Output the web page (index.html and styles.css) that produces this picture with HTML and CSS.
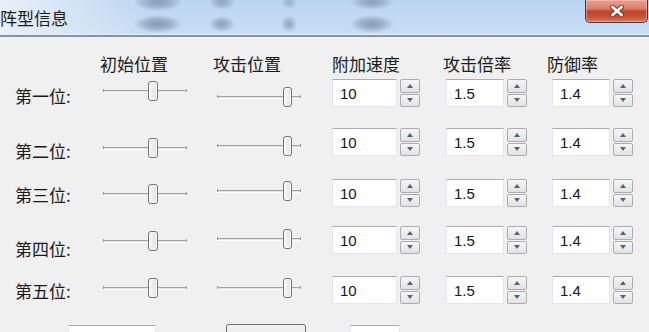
FILE: index.html
```html
<!DOCTYPE html>
<html lang="zh">
<head>
<meta charset="utf-8">
<title>阵型信息</title>
<link rel="stylesheet" href="styles.css">
</head>
<body>
<div class="window">
  <div class="titlebar">
    <span class="title">阵型信息</span>
    <div class="close">
      <svg width="16" height="12" viewBox="0 0 16 12">
        <path d="M3.5 2 L12.5 10 M12.5 2 L3.5 10" stroke="#7a2b1e" stroke-width="4.8" stroke-linecap="round" fill="none"/>
        <path d="M3.5 2 L12.5 10 M12.5 2 L3.5 10" stroke="#ffffff" stroke-width="3" stroke-linecap="round" fill="none"/>
      </svg>
    </div>
  </div>

  <div class="form">
    <div class="row head">
      <div></div>
      <div class="h">初始位置</div>
      <div class="h h-s2">攻击位置</div>
      <div class="h h-n1">附加速度</div>
      <div class="h">攻击倍率</div>
      <div class="h h-n3">防御率</div>
    </div>

    <div class="row r1">
      <div class="lbl">第一位:</div>
      <div class="slider s1"><div class="thumb"></div></div>
      <div class="slider s2"><div class="thumb"></div></div>
      <div class="spin w1"><div class="field">10</div><div class="btns"><div class="btn up"></div><div class="btn down"></div></div></div>
      <div class="spin"><div class="field">1.5</div><div class="btns"><div class="btn up"></div><div class="btn down"></div></div></div>
      <div class="spin"><div class="field">1.4</div><div class="btns"><div class="btn up"></div><div class="btn down"></div></div></div>
    </div>

    <div class="row r2">
      <div class="lbl">第二位:</div>
      <div class="slider s1"><div class="thumb"></div></div>
      <div class="slider s2"><div class="thumb"></div></div>
      <div class="spin w1"><div class="field">10</div><div class="btns"><div class="btn up"></div><div class="btn down"></div></div></div>
      <div class="spin"><div class="field">1.5</div><div class="btns"><div class="btn up"></div><div class="btn down"></div></div></div>
      <div class="spin"><div class="field">1.4</div><div class="btns"><div class="btn up"></div><div class="btn down"></div></div></div>
    </div>

    <div class="row r3">
      <div class="lbl">第三位:</div>
      <div class="slider s1"><div class="thumb"></div></div>
      <div class="slider s2"><div class="thumb"></div></div>
      <div class="spin w1"><div class="field">10</div><div class="btns"><div class="btn up"></div><div class="btn down"></div></div></div>
      <div class="spin"><div class="field">1.5</div><div class="btns"><div class="btn up"></div><div class="btn down"></div></div></div>
      <div class="spin"><div class="field">1.4</div><div class="btns"><div class="btn up"></div><div class="btn down"></div></div></div>
    </div>

    <div class="row r4">
      <div class="lbl">第四位:</div>
      <div class="slider s1"><div class="thumb"></div></div>
      <div class="slider s2"><div class="thumb"></div></div>
      <div class="spin w1"><div class="field">10</div><div class="btns"><div class="btn up"></div><div class="btn down"></div></div></div>
      <div class="spin"><div class="field">1.5</div><div class="btns"><div class="btn up"></div><div class="btn down"></div></div></div>
      <div class="spin"><div class="field">1.4</div><div class="btns"><div class="btn up"></div><div class="btn down"></div></div></div>
    </div>

    <div class="row r5">
      <div class="lbl">第五位:</div>
      <div class="slider s1"><div class="thumb"></div></div>
      <div class="slider s2"><div class="thumb"></div></div>
      <div class="spin w1"><div class="field">10</div><div class="btns"><div class="btn up"></div><div class="btn down"></div></div></div>
      <div class="spin"><div class="field">1.5</div><div class="btns"><div class="btn up"></div><div class="btn down"></div></div></div>
      <div class="spin"><div class="field">1.4</div><div class="btns"><div class="btn up"></div><div class="btn down"></div></div></div>
    </div>

    <div class="bottom">
      <div class="box b1"></div>
      <div class="box b2"></div>
      <div class="box b3"></div>
    </div>
  </div>
</div>
</body>
</html>
```

FILE: styles.css
```css
html, body {
  margin: 0;
  padding: 0;
}
body {
  width: 649px;
  height: 332px;
  overflow: hidden;
  background: #f0f0f0;
  font-family: "Noto Sans CJK SC", "Liberation Sans", sans-serif;
  color: #1a1a1a;
}
.window {
  display: flex;
  flex-direction: column;
  height: 332px;
}

/* ---------- title bar ---------- */
.titlebar {
  height: 35px;
  flex: none;
  display: flex;
  align-items: flex-start;
  justify-content: space-between;
  border-bottom: 2px solid #8494a8;
  box-shadow: inset 0 -1px 0 #e4edf7;
  background:
    radial-gradient(ellipse 24px 9px at 158px 2px, rgba(125,145,172,.85) 0, rgba(125,145,172,.5) 55%, rgba(125,145,172,0) 100%),
    radial-gradient(ellipse 24px 9px at 158px 24px, rgba(125,145,172,.9) 0, rgba(125,145,172,.55) 55%, rgba(125,145,172,0) 100%),
    radial-gradient(ellipse 13px 8px at 222px 2px, rgba(125,145,172,.7) 0, rgba(125,145,172,.4) 55%, rgba(125,145,172,0) 100%),
    radial-gradient(ellipse 13px 8px at 222px 24px, rgba(125,145,172,.8) 0, rgba(125,145,172,.45) 55%, rgba(125,145,172,0) 100%),
    radial-gradient(ellipse 8px 7px at 289px 2px, rgba(125,145,172,.55) 0, rgba(125,145,172,.3) 55%, rgba(125,145,172,0) 100%),
    radial-gradient(ellipse 8px 8px at 289px 24px, rgba(125,145,172,.7) 0, rgba(125,145,172,.4) 55%, rgba(125,145,172,0) 100%),
    radial-gradient(ellipse 22px 8px at 372px 2px, rgba(125,145,172,.8) 0, rgba(125,145,172,.45) 55%, rgba(125,145,172,0) 100%),
    radial-gradient(ellipse 22px 9px at 372px 24px, rgba(125,145,172,.85) 0, rgba(125,145,172,.5) 55%, rgba(125,145,172,0) 100%),
    linear-gradient(to right, rgba(236,243,250,.9) 0, rgba(236,243,250,0) 150px),
    linear-gradient(#bbd5f1, #c8ddf3);
}
.title {
  font-size: 17px;
  line-height: 35px;
  color: #1c1c1c;
}
.close {
  width: 63px;
  height: 23px;
  margin-right: 1px;
  box-sizing: border-box;
  border: 1px solid #6a2a1f;
  border-top: none;
  border-radius: 0 0 5px 5px;
  background: linear-gradient(#e6a191 0%, #d8836d 38%, #c0452c 52%, #c65237 78%, #db7d60 100%);
  box-shadow: inset 0 0 0 1px rgba(255,210,200,.45);
  display: flex;
  align-items: center;
  justify-content: center;
}

/* ---------- form ---------- */
.form {
  display: flex;
  flex-direction: column;
}
.row {
  display: grid;
  grid-template-columns: 88px 114px 115px 114px 106px 1fr;
  padding-left: 15px;
  align-items: start;
}
.head { height: 42px; }
.r1 { height: 49px; }
.r2 { height: 51px; }
.r3 { height: 47px; }
.r4 { height: 50px; }
.r5 { height: 49px; }

.h {
  font-size: 17px;
  line-height: 20px;
  margin-top: 17px;
  margin-left: -3px;
  white-space: nowrap;
}
.h-s2 { margin-left: -4px; }
.h-n1 { margin-left: 0; }
.h-n3 { margin-left: -5px; }

.lbl {
  font-size: 17px;
  line-height: 20px;
  white-space: nowrap;
}
.r1 .lbl { margin-top: 7px; }
.r2 .lbl { margin-top: 13px; }
.r3 .lbl { margin-top: 6px; }
.r4 .lbl { margin-top: 13px; }
.r5 .lbl { margin-top: 5px; }

/* ---------- slider ---------- */
.slider {
  width: 84px;
  height: 20px;
  display: flex;
  background:
    linear-gradient(to right, #999 0, #999 1px, transparent 1px, transparent 83px, #999 83px) 0 8px / 84px 3px no-repeat,
    linear-gradient(#a2a2a2 0, #a2a2a2 1px, #e2e2e2 1px, #e2e2e2 2px, #ffffff 2px) 0 9px / 84px 3px no-repeat;
}
.thumb {
  width: 10px;
  height: 20px;
  box-sizing: border-box;
  border: 1px solid #737373;
  border-radius: 3px;
  background: linear-gradient(to right, #f7f7f7, #e4e4e4);
  box-shadow: inset 0 0 0 1px #fdfdfd;
}
.s1 .thumb { margin-left: 45px; }
.s2 .thumb { margin-left: 66px; width: 9px; }

.r1 .s1 { margin-top: 2px; }
.r1 .s2 { margin-top: 8px; }
.r2 .s1 { margin-top: 10px; }
.r2 .s2 { margin-top: 8px; }
.r3 .s1 { margin-top: 5px; }
.r3 .s2 { margin-top: 2px; }
.r4 .s1 { margin-top: 5px; }
.r4 .s2 { margin-top: 3px; }
.r5 .s1 { margin-top: 2px; }
.r5 .s2 { margin-top: 2px; }

/* ---------- spin box ---------- */
.spin {
  display: flex;
  gap: 3px;
}
.field {
  width: 58px;
  height: 28px;
  box-sizing: border-box;
  background: #fff;
  border: 1px solid #e3e6ec;
  border-top-color: #abadb3;
  padding-left: 7px;
  font-family: "Liberation Sans", "Noto Sans CJK SC", sans-serif;
  font-size: 15px;
  line-height: 27px;
  color: #151515;
}
.w1 .field { width: 65px; }
.btns {
  width: 20px;
  height: 28px;
  display: flex;
  flex-direction: column;
  gap: 1px;
}
.btn {
  flex: 1;
  box-sizing: border-box;
  border: 1px solid #acacac;
  border-radius: 2px;
  background: linear-gradient(#f6f6f6, #e2e2e2);
  display: flex;
  align-items: center;
  justify-content: center;
}
.up::after {
  content: "";
  border-left: 3.5px solid transparent;
  border-right: 3.5px solid transparent;
  border-bottom: 4px solid #4d6287;
}
.down::after {
  content: "";
  border-left: 3.5px solid transparent;
  border-right: 3.5px solid transparent;
  border-top: 4px solid #4d6287;
}

/* ---------- partially visible bottom row ---------- */
.bottom {
  display: flex;
  padding-left: 68px;
  height: 20px;
}
.box {
  height: 20px;
  box-sizing: border-box;
  background: #fff;
  border: 1px solid #e3e6ec;
  border-top-color: #abadb3;
}
.b1 { width: 88px; }
.b2 {
  width: 80px;
  margin-left: 70px;
  margin-top: -1px;
  border: 1px solid #707070;
  border-radius: 3px;
  background: linear-gradient(#f2f2f2, #e6e6e6);
}
.b3 { width: 50px; margin-left: 44px; }
```
